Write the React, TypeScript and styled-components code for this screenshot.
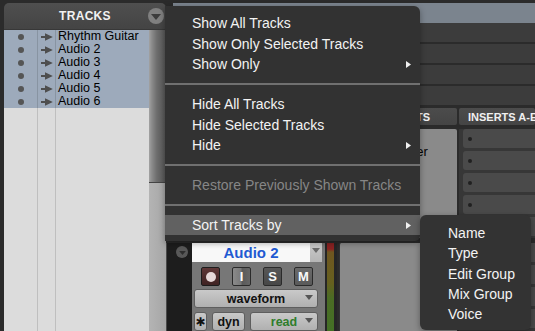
import React from "react";
import styled, { createGlobalStyle } from "styled-components";

const GlobalStyle = createGlobalStyle`
  html, body { margin: 0; padding: 0; background: #2b2b2b; }
  body { font-family: "Liberation Sans", Arial, Helvetica, sans-serif; }
  *, *::before, *::after { box-sizing: border-box; }
`;

const Screen = styled.div`
  position: relative;
  display: flex;
  width: 535px;
  height: 331px;
  overflow: hidden;
  background: #2b2b2b;
`;

/* ---------- Tracks panel ---------- */
const TracksPanel = styled.aside`
  width: 166px;
  flex: none;
  display: flex;
  flex-direction: column;
  padding: 3px 0 0 4px;
`;

const PanelHeader = styled.header`
  height: 27px;
  flex: none;
  display: grid;
  grid-template-columns: 18px 1fr 18px;
  align-items: center;
  background: linear-gradient(#4f4f4f, #444);
  border-radius: 5px 5px 0 0;
  border-bottom: 1px solid #383838;
`;

const PanelTitle = styled.h1`
  grid-column: 2;
  margin: 0;
  text-align: center;
  font-size: 12px;
  font-weight: bold;
  color: #f2f2f2;
  letter-spacing: 0.3px;
`;

const CircleButton = styled.div<{ $size: number; $bg: string }>`
  width: ${(p) => p.$size}px;
  height: ${(p) => p.$size}px;
  border-radius: 50%;
  background: ${(p) => p.$bg};
  display: flex;
  align-items: center;
  justify-content: center;
  padding-top: 1px;
`;

const PanelBody = styled.div`
  flex: 1;
  display: flex;
  min-height: 0;
`;

const TrackList = styled.div`
  width: 145px;
  display: flex;
  flex-direction: column;
  background: #dcdcdc;
`;

const ListRow = styled.div<{ $selected?: boolean }>`
  height: 13px;
  display: grid;
  grid-template-columns: 34px 18px 1fr;
  background: ${(p) => (p.$selected ? "#9daabb" : "transparent")};
`;

const ListFiller = styled(ListRow)`
  flex: 1;
  height: auto;
`;

const ListCell = styled.div`
  display: flex;
  align-items: center;
  justify-content: center;
  border-right: 1px solid rgba(0, 0, 0, 0.13);
`;

const ListName = styled.div`
  padding-left: 2px;
  font-size: 12.5px;
  line-height: 13px;
  color: #000;
  white-space: nowrap;
  overflow: hidden;
`;

const Dot = styled.span`
  width: 6px;
  height: 6px;
  border-radius: 50%;
  background: #555;
`;

const Scrollbar = styled.div`
  width: 17px;
  display: flex;
  flex-direction: column;
`;

const ScrollThumb = styled.div`
  height: 153px;
  background: linear-gradient(to right, #a2a2a2 0, #8a8a8a 3px, #6c6c6c 8px, #565656 100%);
  border-bottom: 1px solid #444;
`;

const ScrollTrack = styled.div`
  flex: 1;
  background: linear-gradient(to right, #b4b4b4, #a6a6a6);
`;

/* ---------- Edit window ---------- */
const Main = styled.main`
  flex: 1;
  min-width: 0;
  display: flex;
  flex-direction: column;
`;

const TopStrip = styled.div`
  height: 23px;
  flex: none;
  padding: 3px 0 0 7px;
`;

const Toolbar = styled.div`
  height: 20px;
  background: #7b848e;
`;

const RulerRow = styled.div`
  height: 21px;
  flex: none;
  background: #3c3c3c;
  border-bottom: 2px solid #2b2b2b;
`;

const ColumnsGrid = styled.div`
  display: grid;
  grid-template-columns: 171px 118px 1fr;
  column-gap: 2px;
`;

const HeaderRow = styled(ColumnsGrid)`
  height: 20px;
  flex: none;
  padding-top: 1px;
  border-bottom: 2px solid #2a2a2a;
`;

const ColumnTitle = styled.div<{ $left?: boolean }>`
  height: 17px;
  display: flex;
  align-items: center;
  justify-content: ${(p) => (p.$left ? "flex-start" : "center")};
  padding-left: ${(p) => (p.$left ? "9px" : "0")};
  background: linear-gradient(#4c4c4c, #444);
  border-radius: 2px;
  font-size: 11px;
  font-weight: bold;
  color: #f0f0f0;
  white-space: nowrap;
  overflow: hidden;
`;

const Lane = styled(ColumnsGrid)`
  height: 114px;
  flex: none;
  padding: 2px 0 3px;
`;

const LaneHead = styled.div`
  display: flex;
`;

const Rail = styled.div`
  width: 26px;
  background: #1d1d1d;
  border-left: 1px solid #4a4a4a;
  padding: 3px 0 0 9px;
`;

const TrackHeader = styled.div`
  width: 133px;
  background: #777;
  display: flex;
  flex-direction: column;
  padding-right: 3px;
`;

const NameRow = styled.div`
  height: 19px;
  display: flex;
`;

const NameBox = styled.div`
  flex: 1;
  background: #f8f8f8;
  display: flex;
  align-items: center;
  justify-content: center;
  font-size: 15px;
  font-weight: bold;
  color: #1f5ad2;
`;

const NameArrow = styled.div`
  width: 12px;
  background: linear-gradient(#cacaca, #b5b5b5);
  display: flex;
  justify-content: center;
  padding-top: 5px;
`;

const ButtonRow = styled.div`
  display: flex;
  gap: 12px;
  margin-top: 5px;
  padding-left: 9px;
`;

const RecButton = styled.div`
  width: 19px;
  height: 19px;
  border-radius: 2px;
  border: 1px solid #1c1c1c;
  background: linear-gradient(#5e3636, #3f2323);
  display: flex;
  align-items: center;
  justify-content: center;
  &::after {
    content: "";
    width: 10px;
    height: 10px;
    border-radius: 50%;
    background: #e6d8d8;
  }
`;

const LetterButton = styled.div<{ $bg: string }>`
  width: 19px;
  height: 19px;
  border-radius: 2px;
  border: 1px solid #2a2a2a;
  background: ${(p) => p.$bg};
  display: flex;
  align-items: center;
  justify-content: center;
  font-size: 13px;
  font-weight: bold;
  color: #fafafa;
`;

const Selector = styled.div<{ $w: number; $color?: string }>`
  width: ${(p) => p.$w}px;
  height: 19px;
  position: relative;
  border-radius: 3px;
  border: 1px solid #5e5e5e;
  background: linear-gradient(#c9c9c9, #b0b0b0);
  display: flex;
  align-items: center;
  justify-content: center;
  font-size: 12.5px;
  font-weight: bold;
  color: ${(p) => p.$color || "#111"};
`;

const SelectorCaret = styled.span`
  position: absolute;
  right: 4px;
  top: 5px;
  display: flex;
`;

const WaveRow = styled.div`
  margin: 3px 0 0 2px;
`;

const BottomRow = styled.div`
  display: flex;
  gap: 5px;
  margin: 4px 0 0 2px;
`;

const Star = styled(Selector)`
  font-family: "DejaVu Sans", sans-serif;
  font-size: 12px;
`;

const Meter = styled.div`
  width: 12px;
  background: #262626;
  padding: 0 3px 0 2px;
  &::after {
    content: "";
    display: block;
    height: 100%;
    background: linear-gradient(#8a2222 0, #8a2222 6px, #6f5620 9px, #66601f 40px, #4b6c24 55px, #3f7127 100%);
  }
`;

const CommentBox = styled.div`
  background: #8a8a8a;
  border-left: 1px solid #333;
  border-radius: 2px;
  padding: 15px 6px 0 9px;
  font-size: 13px;
  line-height: 16px;
  color: #050505;
`;

const InsertColumn = styled.div`
  display: flex;
  flex-direction: column;
  gap: 3px;
  padding-left: 4px;
  background: #373737;
`;

const InsertSlot = styled.div`
  height: 19px;
  border-radius: 3px 0 0 3px;
  background: #4a4a4a;
  display: flex;
  align-items: center;
  padding-left: 5px;
  &::before {
    content: "";
    width: 4px;
    height: 4px;
    border-radius: 50%;
    background: #202020;
  }
`;

/* ---------- Menus ---------- */
const Menu = styled.div`
  position: absolute;
  left: 165px;
  top: 6px;
  width: 255px;
  padding: 6.75px 0 6px;
  background: #323232;
  border-radius: 0 6px 5px 0;
  box-shadow: 0 2px 6px rgba(0, 0, 0, 0.35);
`;

const MenuItem = styled.div<{ $disabled?: boolean; $active?: boolean }>`
  height: 20.5px;
  display: flex;
  align-items: center;
  justify-content: space-between;
  padding: 0 9px 0 27px;
  font-size: 14px;
  white-space: nowrap;
  color: ${(p) => (p.$disabled ? "#868686" : "#f3f3f3")};
  background: ${(p) => (p.$active ? "#616161" : "transparent")};
`;

const MenuSeparator = styled.div`
  height: 19.5px;
  display: flex;
  align-items: center;
  &::after {
    content: "";
    flex: 1;
    height: 2px;
    background: #707070;
  }
`;

const SubMenu = styled.div`
  position: absolute;
  left: 420px;
  top: 215px;
  width: 111px;
  height: 115px;
  padding-top: 8px;
  background: #333;
  border-radius: 6px;
  box-shadow: 0 2px 6px rgba(0, 0, 0, 0.35);
`;

const SubItem = styled.div`
  height: 20.3px;
  display: flex;
  align-items: center;
  padding-left: 28px;
  font-size: 14px;
  color: #f3f3f3;
`;

/* ---------- drawings ---------- */
const Caret = ({ color, w, h }: { color: string; w: number; h: number }) => (
  <svg width={w} height={h} viewBox="0 0 10 6">
    <path d="M0 0H10L5 6Z" fill={color} />
  </svg>
);

const SubArrow = () => (
  <svg width="5" height="7" viewBox="0 0 5 7">
    <path d="M0 0L5 3.5L0 7Z" fill="#f0f0f0" />
  </svg>
);

const ShowArrow = () => (
  <svg width="12" height="8" viewBox="0 0 12 8">
    <path d="M0 3.1H5V4.9H0Z M4 0.3L11.8 4L4 7.7Z" fill="#4e4e4e" />
  </svg>
);

const tracks = ["Rhythm Guitar", "Audio 2", "Audio 3", "Audio 4", "Audio 5", "Audio 6"];

const TrackHead = ({ name, collapsed }: { name: string; collapsed?: boolean }) => (
  <LaneHead>
    <Rail>
      <CircleButton $size={12} $bg="#585858">
        <Caret color="#2e2e2e" w={7} h={4} />
      </CircleButton>
    </Rail>
    <TrackHeader aria-label={name}>
      {!collapsed && (
        <>
          <NameRow>
            <NameBox>{name}</NameBox>
            <NameArrow>
              <Caret color="#6a6a6a" w={8} h={5} />
            </NameArrow>
          </NameRow>
          <ButtonRow>
            <RecButton />
            <LetterButton $bg="linear-gradient(90deg, #8a8a8a 0, #7a7a7a 45%, #5a5a5a 55%, #666 100%)">I</LetterButton>
            <LetterButton $bg="linear-gradient(#575757, #474747)">S</LetterButton>
            <LetterButton $bg="linear-gradient(#6a6a6a, #5a5a5a)">M</LetterButton>
          </ButtonRow>
          <WaveRow>
            <Selector $w={124}>
              waveform
              <SelectorCaret>
                <Caret color="#555" w={8} h={5} />
              </SelectorCaret>
            </Selector>
          </WaveRow>
          <BottomRow>
            <Star $w={13}>✱</Star>
            <Selector $w={33}>dyn</Selector>
            <Selector $w={68} $color="#2f7d2b">
              read
              <SelectorCaret>
                <Caret color="#555" w={8} h={5} />
              </SelectorCaret>
            </Selector>
          </BottomRow>
        </>
      )}
    </TrackHeader>
    <Meter />
  </LaneHead>
);

const Inserts = () => (
  <InsertColumn>
    {[0, 1, 2, 3, 4].map((i) => (
      <InsertSlot key={i} />
    ))}
  </InsertColumn>
);

export default function App() {
  return (
    <>
      <GlobalStyle />
      <Screen>
        <TracksPanel>
          <PanelHeader>
            <PanelTitle>TRACKS</PanelTitle>
            <CircleButton $size={16} $bg="#808080">
              <Caret color="#3c3c3c" w={10} h={6} />
            </CircleButton>
          </PanelHeader>
          <PanelBody>
            <TrackList>
              {tracks.map((t) => (
                <ListRow key={t} $selected>
                  <ListCell>
                    <Dot />
                  </ListCell>
                  <ListCell>
                    <ShowArrow />
                  </ListCell>
                  <ListName>{t}</ListName>
                </ListRow>
              ))}
              <ListFiller>
                <ListCell />
                <ListCell />
                <div />
              </ListFiller>
            </TrackList>
            <Scrollbar>
              <ScrollThumb />
              <ScrollTrack />
            </Scrollbar>
          </PanelBody>
        </TracksPanel>

        <Main>
          <TopStrip>
            <Toolbar />
          </TopStrip>
          <RulerRow />
          <RulerRow />
          <RulerRow />
          <RulerRow />
          <HeaderRow>
            <ColumnTitle />
            <ColumnTitle>COMMENTS</ColumnTitle>
            <ColumnTitle $left>INSERTS A-E</ColumnTitle>
          </HeaderRow>
          <Lane>
            <TrackHead name="Rhythm Guitar" collapsed />
            <CommentBox>Clean Fender</CommentBox>
            <Inserts />
          </Lane>
          <Lane>
            <TrackHead name="Audio 2" />
            <CommentBox />
            <Inserts />
          </Lane>
        </Main>

        <Menu>
          <MenuItem>Show All Tracks</MenuItem>
          <MenuItem>Show Only Selected Tracks</MenuItem>
          <MenuItem>
            Show Only <SubArrow />
          </MenuItem>
          <MenuSeparator />
          <MenuItem>Hide All Tracks</MenuItem>
          <MenuItem>Hide Selected Tracks</MenuItem>
          <MenuItem>
            Hide <SubArrow />
          </MenuItem>
          <MenuSeparator />
          <MenuItem $disabled>Restore Previously Shown Tracks</MenuItem>
          <MenuSeparator />
          <MenuItem $active>
            Sort Tracks by <SubArrow />
          </MenuItem>
        </Menu>

        <SubMenu>
          <SubItem>Name</SubItem>
          <SubItem>Type</SubItem>
          <SubItem>Edit Group</SubItem>
          <SubItem>Mix Group</SubItem>
          <SubItem>Voice</SubItem>
        </SubMenu>
      </Screen>
    </>
  );
}
